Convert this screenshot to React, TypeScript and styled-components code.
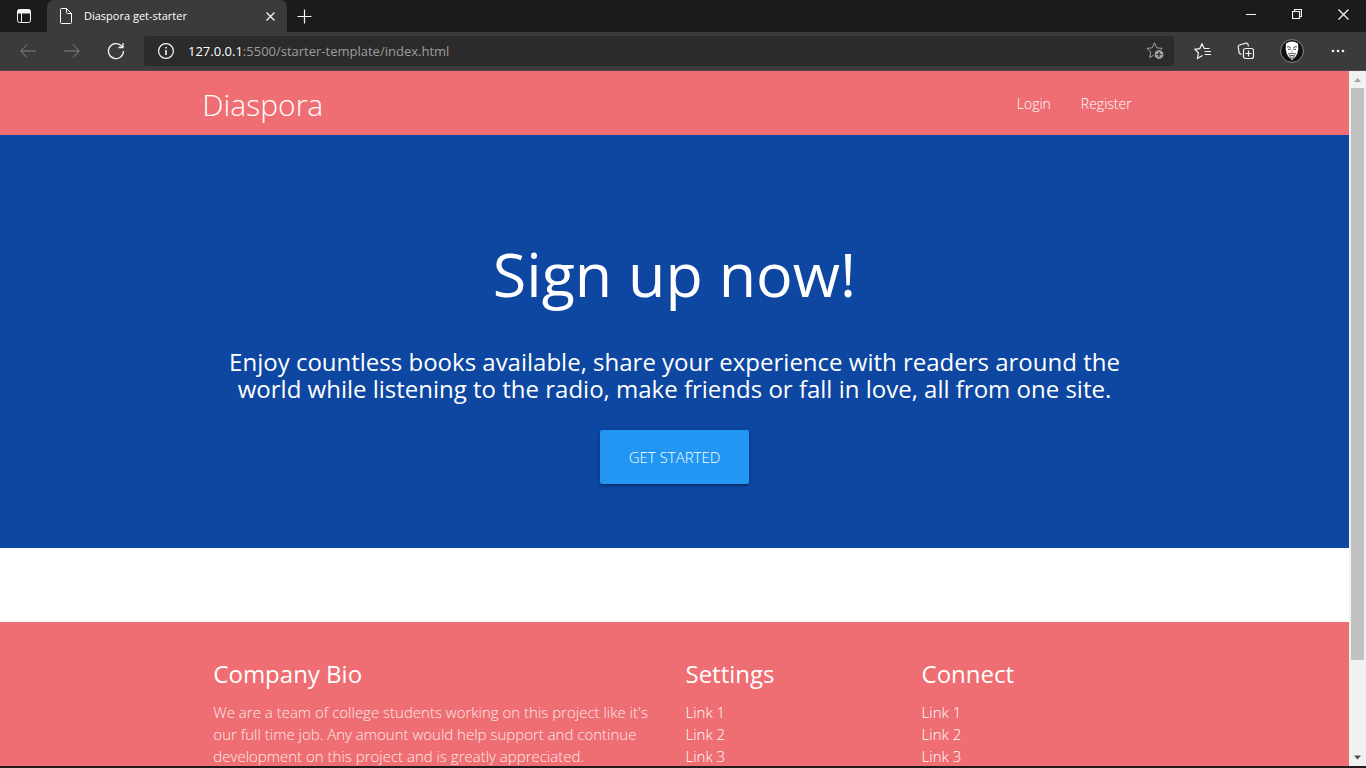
import React from "react";
import styled, { createGlobalStyle } from "styled-components";

const GlobalStyle = createGlobalStyle`
  *, *::before, *::after { box-sizing: border-box; }
  body {
    margin: 0;
    font-family: "Open Sans", "Noto Sans", sans-serif;
    font-size: 15px;
    line-height: 22px;
    background: #ffffff;
    color: #ffffff;
  }
  h1, h2, h3, p, ul { margin: 0; padding: 0; font-weight: 400; }
  ul { list-style: none; }
  button { font: inherit; color: inherit; border: 0; padding: 0; background: none; cursor: pointer; }
`;

const Window = styled.div`
  display: flex;
  flex-direction: column;
  height: 100vh;
  overflow: hidden;
  background: #ffffff;
  border-bottom: 2px solid #231c1d;
`;

const TabStrip = styled.header`
  display: flex;
  align-items: stretch;
  flex: 0 0 32px;
  background: #1b1b1b;
`;

const IconButton = styled.button<{ $width: number; $color?: string }>`
  display: flex;
  align-items: center;
  justify-content: center;
  flex: 0 0 ${(p) => p.$width}px;
  color: ${(p) => p.$color ?? "#f4f4f4"};
`;

const Icon = styled.svg`
  display: block;
  fill: none;
  stroke: currentColor;
`;

const Tab = styled.div`
  display: flex;
  align-items: center;
  flex: 0 0 240px;
  padding-left: 12px;
  border-radius: 7px 7px 0 0;
  background: #3b3b3b;
`;

const TabTitle = styled.span`
  flex: 1;
  padding-left: 11px;
  font-size: 11px;
  white-space: nowrap;
`;

const WindowControls = styled.div`
  display: flex;
  margin-left: auto;
`;

const Toolbar = styled.div`
  display: flex;
  align-items: stretch;
  flex: 0 0 39px;
  padding: 0 6px;
  background: #3b3b3b;
  border-bottom: 1px solid #56484a;
`;

const AddressBar = styled.div`
  display: flex;
  align-items: center;
  flex: 1;
  margin: 4px 6px 4px;
  border-radius: 3px;
  background: #2b2b2b;
`;

const Address = styled.div`
  flex: 1;
  font-size: 13px;
  color: #9d9d9d;
`;

const Host = styled.span`
  color: #ffffff;
`;

const Viewport = styled.div`
  display: flex;
  flex: 1;
  min-height: 0;
`;

const Page = styled.main`
  display: flex;
  flex-direction: column;
  flex: 1;
  overflow: hidden;
`;

const Container = styled.div`
  width: 70%;
  margin: 0 auto;
`;

const Nav = styled.nav`
  flex: 0 0 64px;
  background: #ee6e73;
`;

const NavRow = styled(Container)`
  display: flex;
  align-items: center;
  justify-content: space-between;
  height: 64px;
`;

const Brand = styled.a`
  font-size: 30px;
  line-height: 64px;
  font-weight: 300;
  color: #ffffff;
  text-decoration: none;
  padding-top: 4px;
`;

const NavLinks = styled.ul`
  display: flex;
`;

const NavLink = styled.a`
  display: block;
  padding: 2px 15px 0;
  font-size: 14px;
  line-height: 64px;
  font-weight: 300;
  color: #ffffff;
  text-decoration: none;
`;

const Hero = styled.section`
  flex: 0 0 auto;
  padding: 104px 0 64px;
  background: #0d47a1;
  text-align: center;
`;

const HeroTitle = styled.h1`
  font-size: 61px;
  line-height: 70px;
`;

const HeroText = styled.p`
  margin: 39px 16px 28px;
  font-size: 24px;
  line-height: 27px;
`;

const CallToAction = styled.button`
  height: 54px;
  padding: 0 29px;
  border-radius: 2px;
  background: #2196f3;
  font-weight: 300;
  text-transform: uppercase;
  vertical-align: top;
  box-shadow: 0 2px 2px rgba(0, 0, 0, 0.14), 0 3px 1px -2px rgba(0, 0, 0, 0.12),
    0 1px 5px rgba(0, 0, 0, 0.2);
`;

const Footer = styled.footer`
  flex: 1 0 auto;
  margin-top: 74px;
  padding-top: 37px;
  background: #ee6e73;
`;

const FooterGrid = styled(Container)`
  display: grid;
  grid-template-columns: 2fr 1fr 1fr;
`;

const FooterColumn = styled.section`
  padding: 0 11px;
`;

const FooterTitle = styled.h2`
  margin-bottom: 13px;
  font-size: 24px;
  line-height: 29px;
`;

const FooterText = styled.p`
  font-weight: 300;
  color: #fceaea;
`;

const FooterLink = styled.a`
  color: #ffffff;
  font-weight: 300;
  text-decoration: none;
`;

const Scrollbar = styled.div`
  display: flex;
  flex-direction: column;
  flex: 0 0 17px;
  background: #f1f1f1;
`;

const ScrollTrack = styled.div`
  display: grid;
  grid-template-rows: 32fr 5fr;
  flex: 1;
  padding: 0 2px;
`;

const ScrollThumb = styled.div`
  background: #c1c1c1;
`;

const links = ["Link 1", "Link 2", "Link 3"];

function LinkColumn({ title }: { title: string }) {
  return (
    <FooterColumn>
      <FooterTitle>{title}</FooterTitle>
      <ul>
        {links.map((link) => (
          <li key={link}>
            <FooterLink href="#">{link}</FooterLink>
          </li>
        ))}
      </ul>
    </FooterColumn>
  );
}

export default function App() {
  return (
    <>
      <GlobalStyle />
      <Window>
        <TabStrip>
          <IconButton $width={47} aria-label="Tab actions">
            <Icon width="14" height="14" viewBox="0 0 14 14">
              <rect x="0.5" y="0.5" width="13" height="13" rx="2" />
              <path d="M1 1h12v3H1z" fill="currentColor" />
              <path d="M4.5 4v9" />
            </Icon>
          </IconButton>
          <Tab>
            <Icon width="14" height="16" viewBox="0 0 14 16">
              <path d="M2.5.5h5l5 5v9a1 1 0 0 1-1 1h-9a1 1 0 0 1-1-1v-13a1 1 0 0 1 1-1zM7.5.5v4a1 1 0 0 0 1 1h4" />
            </Icon>
            <TabTitle>Diaspora get-starter</TabTitle>
            <IconButton $width={33} aria-label="Close tab">
              <Icon width="9" height="9" viewBox="0 0 9 9" strokeWidth="1.3">
                <path d="M.5.5l8 8M8.5.5l-8 8" />
              </Icon>
            </IconButton>
          </Tab>
          <IconButton $width={35} aria-label="New tab">
            <Icon width="15" height="15" viewBox="0 0 15 15" strokeWidth="1.2">
              <path d="M7.5.5v14M.5 7.5h14" />
            </Icon>
          </IconButton>
          <WindowControls>
            <IconButton $width={46} aria-label="Minimize">
              <Icon width="10" height="10" viewBox="0 0 10 10">
                <path d="M0 3.5h10" />
              </Icon>
            </IconButton>
            <IconButton $width={46} aria-label="Restore">
              <Icon width="10" height="14" viewBox="0 0 10 14" strokeWidth="1.2">
                <path d="M.5 2.5h7v7h-7zM2.5 2.5v-2h7v7h-2" />
              </Icon>
            </IconButton>
            <IconButton $width={46} aria-label="Close">
              <Icon width="11" height="15" viewBox="0 0 11 15" strokeWidth="1.3">
                <path d="M.5.5l10 10M10.5.5l-10 10" />
              </Icon>
            </IconButton>
          </WindowControls>
        </TabStrip>

        <Toolbar>
          <IconButton $width={44} $color="#858585" aria-label="Back">
            <Icon width="16" height="14" viewBox="0 0 16 14">
              <path d="M7 .5.8 7 7 13.5M.8 7H16" />
            </Icon>
          </IconButton>
          <IconButton $width={44} $color="#858585" aria-label="Forward">
            <Icon width="16" height="14" viewBox="0 0 16 14">
              <path d="M9 .5 15.2 7 9 13.5M15.2 7H0" />
            </Icon>
          </IconButton>
          <IconButton $width={44} aria-label="Refresh">
            <Icon width="18" height="18" viewBox="0 0 18 18" strokeWidth="1.3">
              <path d="M16.5 9A7.5 7.5 0 1 1 14 3.5L15.5 5M16 1v4.5h-4.5" />
            </Icon>
          </IconButton>
          <AddressBar>
            <IconButton $width={44} aria-label="Site information">
              <Icon width="16" height="16" viewBox="0 0 16 16" strokeWidth="1.2">
                <circle cx="8" cy="8" r="7.4" />
                <path d="M8 7v5M8 4v1.5" strokeWidth="1.6" />
              </Icon>
            </IconButton>
            <Address>
              <Host>127.0.0.1</Host>:5500/starter-template/index.html
            </Address>
            <IconButton $width={38} $color="#a0a0a0" aria-label="Add to favorites">
              <Icon width="18" height="18" viewBox="0 0 18 18">
                <path d="M8.5.8 10.7 5.8 16.2 6.4 12.2 10 13.3 15.5 8.5 12.8 3.7 15.5 4.8 10 .8 6.4 6.3 5.8Z" />
                <circle cx="13" cy="12.5" r="4.9" fill="currentColor" stroke="#2b2b2b" />
                <path d="M13 10v5M10.5 12.5h5" stroke="#2b2b2b" strokeWidth="1.2" />
              </Icon>
            </IconButton>
          </AddressBar>
          <IconButton $width={44} aria-label="Favorites">
            <Icon width="17" height="17" viewBox="0 0 17 17" strokeWidth="1.2">
              <path d="M15.5 5.5H10.2L8 .8 5.8 5.6.8 6.3 4.4 9.8 3.5 15.3 8.5 12.5M10.5 8.5H17M10.5 11.5H17" />
            </Icon>
          </IconButton>
          <IconButton $width={44} aria-label="Collections">
            <Icon width="18" height="18" viewBox="0 0 18 18" strokeWidth="1.2">
              <rect x="6.5" y="6.5" width="10" height="10" rx="2" />
              <path d="M11.5 8.5v6M8.5 11.5h6M4.5 12.5 2.8 11.6Q1.6 11 2 9.5L1.2 5Q1 3.5 2.5 3L9 1.2Q10.6 1 11 2.5L11.4 4.5" />
            </Icon>
          </IconButton>
          <IconButton $width={48} aria-label="Profile">
            <Icon width="24" height="24" viewBox="0 0 24 24">
              <circle cx="12" cy="12" r="11.4" fill="#111111" stroke="#8b8b8b" />
              <path
                d="M6 4.500Q9 2.500 12 2.500 15 2.500 18 4.500 19 10 17.300 14.500 15.800 18.500 12 21.500 8.200 18.500 6.700 14.500 5 10 6 4.500Z"
                fill="#ffffff"
                stroke="none"
              />
              <path
                d="M7 8Q9 6.800 10.800 9M17 8Q15 6.800 13.200 9M8 10.300h2.500M13.500 10.300H16M8 14.800Q9.500 15.300 12 14 14.500 15.300 16 14.800M10.300 16.500h3.400"
                stroke="#1c1c1c"
                strokeWidth="0.8"
              />
              <path d="M9.500 16 10.700 20M14.500 16 13.300 20M12 17.500v3.500" stroke="#1c1c1c" strokeWidth="0.7" />
              <path d="M11.300 9.500 11 13h2L12.700 9.500" stroke="#b0b0b0" strokeWidth="0.5" />
            </Icon>
          </IconButton>
          <IconButton $width={44} aria-label="Settings and more">
            <Icon width="14" height="4" viewBox="0 0 14 4">
              <g fill="currentColor" stroke="none">
                <circle cx="2" cy="2" r="1.3" />
                <circle cx="7" cy="2" r="1.3" />
                <circle cx="12" cy="2" r="1.3" />
              </g>
            </Icon>
          </IconButton>
        </Toolbar>

        <Viewport>
          <Page>
            <Nav>
              <NavRow>
                <Brand href="#">Diaspora</Brand>
                <NavLinks>
                  <li><NavLink href="#">Login</NavLink></li>
                  <li><NavLink href="#">Register</NavLink></li>
                </NavLinks>
              </NavRow>
            </Nav>
            <Hero>
              <Container>
                <HeroTitle>Sign up now!</HeroTitle>
                <HeroText>
                  Enjoy countless books available, share your experience with readers around the
                  world while listening to the radio, make friends or fall in love, all from one
                  site.
                </HeroText>
                <CallToAction>Get Started</CallToAction>
              </Container>
            </Hero>
            <Footer>
              <FooterGrid>
                <FooterColumn>
                  <FooterTitle>Company Bio</FooterTitle>
                  <FooterText>
                    We are a team of college students working on this project like it's our full
                    time job. Any amount would help support and continue development on this
                    project and is greatly appreciated.
                  </FooterText>
                </FooterColumn>
                <LinkColumn title="Settings" />
                <LinkColumn title="Connect" />
              </FooterGrid>
            </Footer>
          </Page>
          <Scrollbar aria-hidden="true">
            <Icon width="17" height="17" viewBox="0 0 17 17">
              <path d="M5 11 8.5 7 12 11z" fill="#a3a3a3" stroke="none" />
            </Icon>
            <ScrollTrack>
              <ScrollThumb />
            </ScrollTrack>
            <Icon width="17" height="17" viewBox="0 0 17 17">
              <path d="M5 6.5 8.5 10.5 12 6.5z" fill="#505050" stroke="none" />
            </Icon>
          </Scrollbar>
        </Viewport>
      </Window>
    </>
  );
}
